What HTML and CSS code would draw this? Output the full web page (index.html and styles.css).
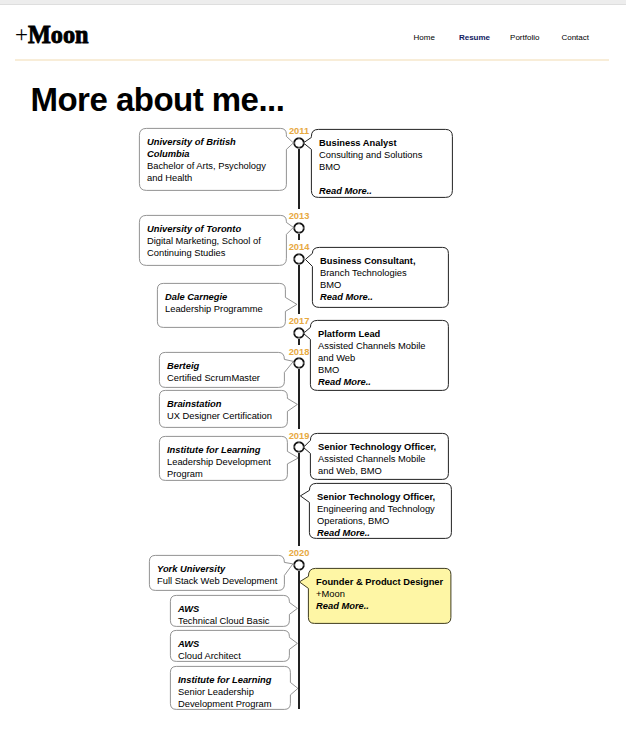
FILE: index.html
```html
<!DOCTYPE html>
<html lang="en">
<head>
<meta charset="utf-8">
<title>+Moon | Resume</title>
<link rel="stylesheet" href="styles.css">
</head>
<body>
<svg width="0" height="0" class="defs"><symbol id="ring" viewBox="0 0 12 12"><circle cx="6" cy="6" r="4.8" fill="#fff" stroke="#111" stroke-width="1.9"/><path d="M6 0V3M6 9V12M0 6H3M9 6H12" stroke="#fff" stroke-width=".5"/></symbol></svg>
<header class="header">
<a class="logo"><span class="plus">+</span><span class="moon">Moon</span></a>
<nav class="nav"><a class="home">Home</a><a class="resume">Resume</a><a class="portfolio">Portfolio</a><a>Contact</a></nav>
</header>
<main>
<h1>More about me...</h1>
<div class="timeline">
<section class="education">
<article class="card ubc"><svg><path d="M7 0H141Q147 0 147 6V8L154 14.5L147 21V56Q147 62 140 62H7Q0 62 0 55V7Q0 0 7 0Z"/></svg><h2>University of British<br>Columbia</h2><p>Bachelor of Arts, Psychology<br>and Health</p></article>
<article class="card toronto"><svg><path d="M7 0H141Q147 0 147 6V7L154 12L147 19V43Q147 50 140 50H7Q0 50 0 43V7Q0 0 7 0Z"/></svg><h2>University of Toronto</h2><p>Digital Marketing, School of<br>Continuing Studies</p></article>
<article class="card carnegie"><svg><path d="M6 0H122Q128 0 128 6V14L139.500 21L128 28V38Q128 44 122 44H6Q0 44 0 38V6Q0 0 6 0Z"/></svg><h2>Dale Carnegie</h2><p>Leadership Programme</p></article>
<article class="card berteig"><svg><path d="M6 0H119Q125 0 125 7L134 9L125 20V29Q125 35 119 35H6Q0 35 0 29V6Q0 0 6 0Z"/></svg><h2>Berteig</h2><p>Certified ScrumMaster</p></article>
<article class="card brain"><svg><path d="M6 0H122Q128 0 128 6V8L138 14L128 21V31Q128 37 122 37H6Q0 37 0 31V6Q0 0 6 0Z"/></svg><h2>Brainstation</h2><p>UX Designer Certification</p></article>
<article class="card institute"><svg><path d="M6 0H122Q128 0 128 6V15L139 21.500L128 27.500V38Q128 44 122 44H6Q0 44 0 38V6Q0 0 6 0Z"/></svg><h2>Institute for Learning</h2><p>Leadership Development<br>Program</p></article>
<article class="card york"><svg><path d="M6 0H129Q135 0 135 7L143.500 8.500L135 20V29Q135 35 129 35H6Q0 35 0 29V6Q0 0 6 0Z"/></svg><h2>York University</h2><p>Full Stack Web Development</p></article>
<article class="card aws"><svg><path d="M6 0H113Q119 0 119 6V7L127 13L119 19V25Q119 31 113 31H6Q0 31 0 25V6Q0 0 6 0Z"/></svg><h2>AWS</h2><p>Technical Cloud Basic</p></article>
<article class="card aws architect"><svg><path d="M6 0H113Q119 0 119 6V7L127 13L119 19V25Q119 31 113 31H6Q0 31 0 25V6Q0 0 6 0Z"/></svg><h2>AWS</h2><p>Cloud Architect</p></article>
<article class="card leadership"><svg><path d="M6 0H114Q120 0 120 6V16L127.500 22L120 28.500V37Q120 43 114 43H6Q0 43 0 37V6Q0 0 6 0Z"/></svg><h2>Institute for Learning</h2><p>Senior Leadership<br>Development Program</p></article>
</section>
<ol class="axis">
<li class="y2011"><time>2011</time><svg><use href="#ring"/></svg></li>
<li class="y2013"><time>2013</time><svg><use href="#ring"/></svg></li>
<li class="y2014"><time>2014</time><svg><use href="#ring"/></svg></li>
<li class="y2017"><time>2017</time><svg><use href="#ring"/></svg></li>
<li class="y2018"><time>2018</time><svg><use href="#ring"/></svg></li>
<li class="y2019"><time>2019</time><svg><use href="#ring"/></svg></li>
<li class="y2020"><time>2020</time><svg><use href="#ring"/></svg></li>
</ol>
<section class="work">
<article class="card analyst"><svg><path d="M7 0H134Q141 0 141 7V61Q141 68 134 68H7Q0 68 0 61V20L-8 13.500L0 8V7Q0 0 7 0Z"/></svg><h2>Business Analyst</h2><p>Consulting and Solutions<br>BMO</p><a class="more">Read More..</a></article>
<article class="card consultant"><svg><path d="M7 0H130Q136 0 136 6V54Q136 60 130 60H7Q0 60 0 54V19L-7 12L0 6Q0 0 7 0Z"/></svg><h2>Business Consultant,</h2><p>Branch Technologies<br>BMO</p><a class="more">Read More..</a></article>
<article class="card lead"><svg><path d="M7 0H132Q138 0 138 6V64Q138 70 132 70H7Q0 70 0 64V19L-7 13L0 7Q0 0 7 0Z"/></svg><h2>Platform Lead</h2><p>Assisted Channels Mobile<br>and Web<br>BMO</p><a class="more">Read More..</a></article>
<article class="card officer"><svg><path d="M7 0H132Q138 0 138 6V40Q138 46 132 46H7Q0 46 0 40V20L-7 14L0 7Q0 0 7 0Z"/></svg><h2>Senior Technology Officer,</h2><p>Assisted Channels Mobile<br>and Web, BMO</p></article>
<article class="card engineering"><svg><path d="M7 0H136Q142 0 142 6V49Q142 55 136 55H7Q0 55 0 49V19L-9 12.500L0 7Q0 0 7 0Z"/></svg><h2>Senior Technology Officer,</h2><p>Engineering and Technology<br>Operations, BMO</p><a class="more">Read More..</a></article>
<article class="card founder"><svg><path d="M7 0H136.500Q142.500 0 142.500 6V49Q142.500 55 136.500 55H6Q0 55 0 49V20L-9 13.500L0 8Q0 0 7 0Z"/></svg><h2>Founder &amp; Product Designer</h2><p>+Moon</p><a class="more">Read More..</a></article>
</section>
</div>
</main>
</body>
</html>
```
FILE: styles.css
```css
* { box-sizing: border-box; }
body { margin: 0; height: 731px; overflow: hidden; background: #fff; border-top: 4px solid #ededed; box-shadow: inset 0 1px #dedede; color: #000; font-family: "Liberation Sans", Arial, sans-serif; }
.defs { position: absolute; }
.header { display: flex; justify-content: space-between; height: 57px; margin: 0 17px 0 15px; padding-right: 20px; border-bottom: 2px solid #f8edd8; }
.logo { display: flex; height: 38px; margin-top: 12px; font-family: "Liberation Serif", serif; line-height: 38px; }
.plus { width: 13px; font-size: 23px; }
.moon { font-size: 25.5px; font-weight: bold; -webkit-text-stroke: .9px #000; transform: scaleX(.95); transform-origin: left; }
.nav { display: flex; margin-top: 28px; font-size: 8px; line-height: 12px; }
.home { margin-right: 24px; }
.resume { margin-right: 20px; color: #10205f; font-weight: bold; }
.portfolio { margin-right: 22px; }
h1 { height: 64px; margin: 0; padding: 18px 0 0 30.5px; font-size: 33px; letter-spacing: -.52px; line-height: 42px; white-space: nowrap; }
.timeline { display: grid; grid-template-columns: 149px 22px 145px; height: 590px; margin-left: 139px; }
.card { position: relative; flex: none; padding: 8px 0 0 8px; font-size: 9.35px; line-height: 12px; white-space: nowrap; }
.card svg { position: absolute; inset: 0; width: 100%; height: 100%; overflow: visible; fill: none; stroke: #777; stroke-width: .8; transform: translate(.4px, .4px); z-index: -1; }
.card h2, .card p { margin: 0; font-size: inherit; }
.education, .work { display: flex; flex-direction: column; }
.education h2, .more { font-style: italic; font-weight: bold; }
.more { display: block; }
.work svg { stroke: #222; stroke-width: 1; }
.ubc { height: 62px; margin-top: 3px; }
.toronto { height: 50px; margin-top: 25px; }
.carnegie { height: 44px; margin: 18px 0 0 18px; }
.berteig { height: 35px; margin: 25px 0 0 20px; }
.brain { height: 37px; margin: 3px 0 0 20px; }
.institute { height: 44px; margin: 9px 0 0 20px; }
.york { height: 35px; margin: 75px 0 0 10px; }
.aws { height: 31px; margin: 5px 0 0 31px; }
.architect { margin-top: 4px; }
.leadership { height: 43px; margin: 5px 0 0 31px; }
.axis { display: flex; flex-direction: column; margin: 0; padding: 0; list-style: none; }
.axis li { display: flex; flex: none; flex-direction: column; align-items: center; }
.axis li::after { content: ""; flex: 1; width: 2px; margin-bottom: 1px; background: #222; }
.axis time { height: 12px; color: #e7a941; font-size: 9.3px; font-weight: bold; line-height: 12px; }
.axis svg { flex: none; width: 12px; height: 12px; }
.y2011 { height: 85px; }
.y2013 { height: 31px; }
.y2014 { height: 74px; }
.y2017 { height: 31px; }
.y2018 { height: 84px; }
.axis .y2018 svg, .axis .y2019 svg { margin-top: -1px; }
.y2019 { height: 117px; }
.y2020 { height: 163px; }
.analyst { height: 68px; margin: 4px 0 0 1px; }
.analyst .more { margin-top: 12px; }
.consultant { height: 60px; margin: 50px 0 0 2px; }
.lead { height: 70px; margin: 13px 0 0; }
.officer { height: 46px; margin: 43px 0 0; }
.engineering { height: 55px; margin: 4px 0 0 -1px; }
.founder { height: 55px; margin: 30px 0 0 -2px; }
.founder svg { fill: #fef6a5; stroke: #3f3c20; }
```
